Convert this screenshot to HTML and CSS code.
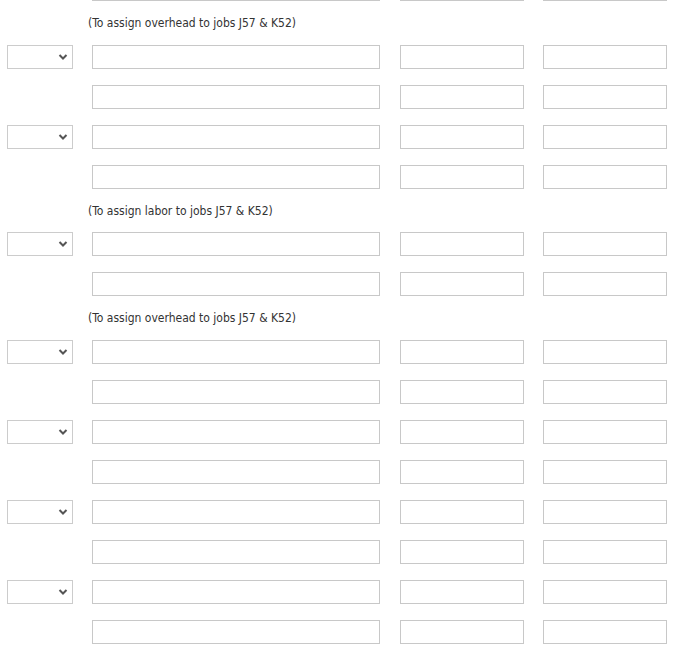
FILE: index.html
```html
<!DOCTYPE html>
<html>
<head>
<meta charset="utf-8">
<link rel="stylesheet" href="styles.css">
</head>
<body>
<div class="sheet">
  <div class="row first"><span class="acct-spacer"></span><input class="f-desc"><input class="f-num"><input class="f-num"></div>
  <div class="row note"><span class="acct-spacer"></span><span class="memo">(To assign overhead to jobs J57 &amp; K52)</span></div>
  <div class="row"><select class="acct"><option></option></select><input class="f-desc"><input class="f-num"><input class="f-num"></div>
  <div class="row"><span class="acct-spacer"></span><input class="f-desc"><input class="f-num"><input class="f-num"></div>
  <div class="row"><select class="acct"><option></option></select><input class="f-desc"><input class="f-num"><input class="f-num"></div>
  <div class="row"><span class="acct-spacer"></span><input class="f-desc"><input class="f-num"><input class="f-num"></div>
  <div class="row note"><span class="acct-spacer"></span><span class="memo">(To assign labor to jobs J57 &amp; K52)</span></div>
  <div class="row"><select class="acct"><option></option></select><input class="f-desc"><input class="f-num"><input class="f-num"></div>
  <div class="row"><span class="acct-spacer"></span><input class="f-desc"><input class="f-num"><input class="f-num"></div>
  <div class="row note"><span class="acct-spacer"></span><span class="memo">(To assign overhead to jobs J57 &amp; K52)</span></div>
  <div class="row"><select class="acct"><option></option></select><input class="f-desc"><input class="f-num"><input class="f-num"></div>
  <div class="row"><span class="acct-spacer"></span><input class="f-desc"><input class="f-num"><input class="f-num"></div>
  <div class="row"><select class="acct"><option></option></select><input class="f-desc"><input class="f-num"><input class="f-num"></div>
  <div class="row"><span class="acct-spacer"></span><input class="f-desc"><input class="f-num"><input class="f-num"></div>
  <div class="row"><select class="acct"><option></option></select><input class="f-desc"><input class="f-num"><input class="f-num"></div>
  <div class="row"><span class="acct-spacer"></span><input class="f-desc"><input class="f-num"><input class="f-num"></div>
  <div class="row"><select class="acct"><option></option></select><input class="f-desc"><input class="f-num"><input class="f-num"></div>
  <div class="row"><span class="acct-spacer"></span><input class="f-desc"><input class="f-num"><input class="f-num"></div>
</div>
</body>
</html>
```
FILE: styles.css
```css
html, body {
  margin: 0;
  padding: 0;
  background: #ffffff;
  overflow: hidden;
}
body {
  font-family: "DejaVu Sans Condensed", "DejaVu Sans", sans-serif;
  color: #333333;
}
.sheet {
  display: flex;
  flex-direction: column;
  gap: 15.93px;
  padding-left: 7px;
}
.row {
  display: flex;
  align-items: center;
  height: 24px;
}
.row.first {
  margin-top: -23px;
}
.row.note {
  height: 12px;
}
.acct, .acct-spacer {
  width: 66px;
  height: 24px;
  margin-right: 19px;
  flex: none;
  box-sizing: border-box;
}
.row.note .acct-spacer {
  height: 12px;
}
.acct {
  appearance: none;
  -webkit-appearance: none;
  border: 1px solid #cccccc;
  border-radius: 0;
  background-color: #ffffff;
  background-image: url("data:image/svg+xml;utf8,<svg xmlns='http://www.w3.org/2000/svg' width='10' height='8' viewBox='0 0 10 8'><path d='M1.5 2 L5 5.5 L8.5 2' fill='none' stroke='%23555555' stroke-width='2'/></svg>");
  background-repeat: no-repeat;
  background-position: right 4px center;
  padding: 0;
}
input {
  box-sizing: border-box;
  height: 24px;
  border: 1px solid #c8c8c8;
  border-radius: 0;
  margin: 0;
  padding: 0 4px;
  flex: none;
  background: #ffffff;
}
.f-desc {
  width: 288px;
  margin-right: 20px;
}
.f-num {
  width: 124px;
}
.f-num + .f-num {
  margin-left: 19px;
}
.memo {
  font-size: 12px;
  line-height: 12px;
  margin-left: -4px;
  white-space: nowrap;
}
```
